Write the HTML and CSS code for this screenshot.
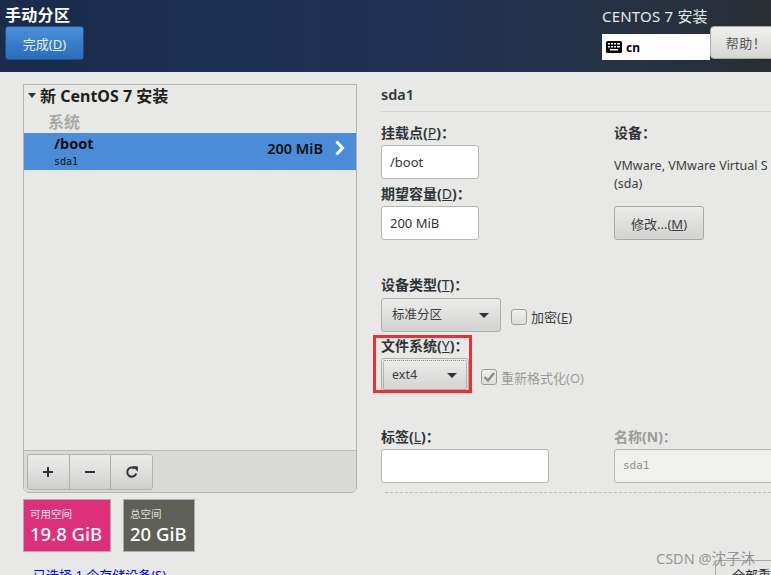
FILE: index.html
```html
<!DOCTYPE html>
<html lang="zh-CN">
<head>
<meta charset="utf-8">
<title>手动分区</title>
<link rel="stylesheet" href="styles.css">
</head>
<body>
<div class="app">
  <header class="header">
    <div class="header-left">
      <h1 class="title">手动分区</h1>
      <button class="done">完成(<u>D</u>)</button>
    </div>
    <div class="header-right">
      <div class="product">CENTOS 7 安装</div>
      <div class="kb-row">
        <div class="kb">
          <svg class="kb-icon" width="16" height="14" viewBox="0 0 16 14"><rect x="0" y="1" width="16" height="12" rx="1.5" fill="#000"/><g fill="#fff"><rect x="2" y="3" width="2" height="1.5"/><rect x="5" y="3" width="2" height="1.5"/><rect x="8" y="3" width="2" height="1.5"/><rect x="11" y="3" width="3" height="1.5"/><rect x="2" y="6" width="2" height="1.5"/><rect x="5" y="6" width="2" height="1.5"/><rect x="8" y="6" width="2" height="1.5"/><rect x="11" y="6" width="3" height="1.5"/><rect x="4" y="9" width="8" height="1.5"/></g></svg>
          <span class="kb-text">cn</span>
        </div>
        <button class="help">帮助！</button>
      </div>
    </div>
  </header>
  <main class="main">
    <section class="left">
      <div class="panel">
        <div class="tree">
          <div class="tree-head"><span class="arrow"></span><span>新 CentOS 7 安装</span></div>
          <div class="tree-group">系统</div>
          <div class="row">
            <div class="row-names">
              <div class="row-mount">/boot</div>
              <div class="row-dev">sda1</div>
            </div>
            <div class="row-size">200 MiB</div>
            <svg class="row-chev" width="12" height="16" viewBox="0 0 12 16"><path d="M2.5 1.5 L8.5 8 L2.5 14.5" fill="none" stroke="#fff" stroke-width="3"/></svg>
          </div>
        </div>
        <div class="toolbar">
          <div class="btn-group">
            <button class="tool"><svg width="12" height="12" viewBox="0 0 12 12"><path d="M6 1v10M1 6h10" stroke="#2e3436" stroke-width="2" fill="none"/></svg></button>
            <button class="tool"><svg width="12" height="12" viewBox="0 0 12 12"><path d="M1 6h10" stroke="#2e3436" stroke-width="2" fill="none"/></svg></button>
            <button class="tool"><svg width="14" height="14" viewBox="0 0 14 14"><path d="M11.2 8.5A4.6 4.6 0 1 1 9.6 3.4" stroke="#2e3436" stroke-width="2" fill="none"/><path d="M7.6 1 13 1.4 12.6 6.8Z" fill="#2e3436"/></svg></button>
          </div>
        </div>
      </div>
      <div class="stats">
        <div class="stat stat-free"><div class="stat-label">可用空间</div><div class="stat-value">19.8 GiB</div></div>
        <div class="stat stat-total"><div class="stat-label">总空间</div><div class="stat-value">20 GiB</div></div>
      </div>
      <div class="link"><u>已选择 1 个存储设备(S)</u></div>
    </section>
    <section class="right">
      <div class="dev-title">sda1</div>
      <div class="cols cols-top">
        <div class="col-a">
          <label class="lbl lbl-first">挂载点(<u>P</u>)：</label>
          <div class="input input-s">/boot</div>
          <label class="lbl lbl-next">期望容量(<u>D</u>)：</label>
          <div class="input input-s">200 MiB</div>
        </div>
        <div class="col-b">
          <label class="lbl lbl-first">设备：</label>
          <div class="dev-desc">VMware, VMware Virtual S<br>(sda)</div>
          <button class="modify">修改...(<u>M</u>)</button>
        </div>
      </div>
      <label class="lbl lbl-type">设备类型(<u>T</u>)：</label>
      <div class="opt-row">
        <div class="select select-w">标准分区<span class="caret"></span></div>
        <span class="check"></span><span class="check-text">加密(<u>E</u>)</span>
      </div>
      <label class="lbl lbl-fs">文件系统(<u>Y</u>)：</label>
      <div class="opt-row opt-fs">
        <div class="select select-n"><span class="focus"></span>ext4<span class="caret"></span></div>
        <span class="check check-on"><svg width="14" height="14" viewBox="0 0 14 14"><path d="M2.5 7 6 10.5 12 3" fill="none" stroke="#8a8c88" stroke-width="2.4"/></svg></span><span class="check-text dim">重新格式化(O)</span>
      </div>
      <div class="cols cols-label">
        <div class="col-a">
          <label class="lbl">标签(<u>L</u>)：</label>
          <div class="input input-m"></div>
        </div>
        <div class="col-b">
          <label class="lbl dim">名称(N)：</label>
          <div class="input input-l">sda1</div>
        </div>
      </div>
      <div class="dash"></div>
    </section>
  </main>
  <div class="redbox"></div>
  <button class="reset">全部重设(R)</button>
  <div class="mark">CSDN @沈子沐</div>
</div>
</body>
</html>
```
FILE: styles.css
```css
* { box-sizing: border-box; }
html, body { margin: 0; padding: 0; height: 100%; overflow: hidden; }
body {
  font-family: "Noto Sans", "Noto Sans CJK SC", sans-serif;
  font-size: 13px;
  color: #2e3436;
  background: #e8e8e6;
}
.app { position: relative; width: 771px; height: 575px; overflow: hidden; background: #e8e8e6; }
button { font-family: inherit; margin: 0; padding: 0; }

.header {
  height: 72px;
  display: flex;
  justify-content: space-between;
  color: #fff;
  background: linear-gradient(90deg, #1a2b4c 0%, #1c3054 30%, #1f3050 55%, #243349 75%, #2a2e33 100%);
}
.header-left { padding: 5px 0 0 5px; }
.title { margin: 0; font-size: 16px; font-weight: 700; line-height: 20px; color: #fff; letter-spacing: 0.3px; }
.done {
  display: block;
  width: 79px; height: 34px; margin-top: 1px;
  border: 1px solid #1d4f8c; border-radius: 3px;
  background: linear-gradient(180deg, #4a90d9 0%, #2a6cb8 100%);
  color: #e8f0f8; font-size: 13px;
}
.header-right { width: 169px; padding-top: 6px; }
.product { font-size: 15px; line-height: 20px; color: #e6e8ea; letter-spacing: 0.2px; }
.kb-row { display: flex; align-items: flex-start; margin-top: 8px; }
.kb { width: 108px; height: 26px; flex: none; background: #fff; display: flex; align-items: center; padding-left: 4px; gap: 4px; }
.kb-icon { display: block; }
.kb-text { color: #000; font-weight: 700; font-size: 12px; }
.help {
  width: 72px; height: 33px; margin-top: -8px; flex: none;
  border: 1px solid #a8a8a4; border-radius: 4px;
  background: linear-gradient(180deg, #f0f0ee 0%, #d6d6d3 100%);
  color: #555753; font-size: 13px; letter-spacing: 0.5px;
}

.main { display: flex; }
.left { width: 334px; margin-left: 23px; padding-top: 12px; }
.panel {
  height: 409px;
  border: 1px solid #b4b4b0;
  border-radius: 0 0 6px 6px;
  display: flex; flex-direction: column;
}
.tree { flex: 1; }
.tree-head { height: 20px; display: flex; align-items: center; padding-left: 4px; gap: 4px; font-size: 16px; font-weight: 700; color: #1e1e1e; }
.arrow { width: 0; height: 0; border-left: 4.5px solid transparent; border-right: 4.5px solid transparent; border-top: 5px solid #2e3436; }
.tree-group { height: 28px; padding: 7px 0 0 24px; font-size: 16px; line-height: 20px; font-weight: 700; color: #a9aaa7; }
.row { height: 37px; background: #4a8cd8; display: flex; align-items: center; padding-left: 30px; color: #0e0e0e; }
.row-names { flex: 1; align-self: flex-start; }
.row-mount { font-size: 14.5px; font-weight: 700; line-height: 20px; }
.row-dev { font-family: "DejaVu Sans Mono", monospace; font-size: 10px; line-height: 14px; margin-top: 2px; }
.row-size { font-size: 14.5px; font-weight: 600; margin: 0 11px 8px 0; }
.row-chev { margin: 0 10px 8px 0; }
.toolbar { height: 42px; flex: none; border-top: 1px solid #b9b9b6; background: #d9d9d7; border-radius: 0 0 5px 5px; padding: 3px 0 0 3px; }
.btn-group { display: flex; width: 126px; height: 36px; border: 1px solid #b0b0ac; border-radius: 3px; overflow: hidden; }
.tool { flex: 1; border: 0; border-right: 1px solid #aeaeaa; background: linear-gradient(180deg, #ececea 0%, #d0d0ce 100%); display: flex; align-items: center; justify-content: center; }
.tool:last-child { border-right: 0; }
.tool svg { display: block; }

.stats { display: flex; gap: 12px; margin-top: 6px; }
.stat { height: 53px; border: 1px solid #adadaa; color: #fff; padding: 7px 6px 0; }
.stat-free { width: 88px; background: #de307a; }
.stat-total { width: 72px; background: #5e5f57; }
.stat-label { font-size: 10.5px; line-height: 14px; color: #f3e3ea; }
.stat-total .stat-label { color: #e0e0dc; }
.stat-value { font-size: 18.5px; line-height: 24px; font-weight: 500; margin-top: 1px; white-space: nowrap; }
.link { margin: 15px 0 0 10px; font-size: 13px; line-height: 16px; color: #0000e6; white-space: nowrap; }

.right { flex: 1; margin-left: 24px; min-width: 0; }
.dev-title { height: 40px; padding-top: 12px; font-size: 14.5px; font-weight: 600; line-height: 20px; color: #2e3436; border-bottom: 1px solid #d2d2cf; }
.cols { display: flex; }
.col-a { width: 233px; flex: none; }
.col-b { flex: 1; min-width: 0; white-space: nowrap; overflow: hidden; }
.lbl { display: block; font-size: 14px; line-height: 18px; font-weight: 700; color: #2e3436; }
.lbl u { font-weight: 400; }
.lbl-first { margin-top: 12px; }
.lbl-next { margin-top: 6px; }
.input {
  height: 34px; margin-top: 3px;
  background: #fff; border: 1px solid #b6b6b2; border-radius: 3px;
  padding-left: 8px; line-height: 32px; font-size: 13px; color: #2e3436;
}
.input-s { width: 98px; }
.input-m { width: 168px; }
.input-l { width: 190px; background: #f0f0ee; color: #8f908d; font-family: "DejaVu Sans Mono", monospace; font-size: 11px; }
.dev-desc { margin-top: 15px; font-size: 12.5px; line-height: 18px; color: #3a3d3e; }
.modify {
  display: block; width: 90px; height: 34px; margin-top: 13px;
  border: 1px solid #a8a8a4; border-radius: 3px;
  background: linear-gradient(180deg, #ececea 0%, #d2d2d0 100%);
  color: #3a3d3e; font-size: 13px;
}
.lbl-type { margin-top: 36px; }
.opt-row { display: flex; align-items: center; margin-top: 4px; height: 34px; }
.select {
  position: relative; height: 34px;
  border: 1px solid #aeaeaa; border-radius: 3px;
  background: linear-gradient(180deg, #ececea 0%, #d2d2d0 100%);
  padding-left: 10px; line-height: 32px; font-size: 12.5px; color: #3a3d3e; flex: none;
}
.select-w { width: 120px; }
.select-n { width: 88px; }
.caret { position: absolute; right: 11px; top: 14px; width: 0; height: 0; border-left: 5px solid transparent; border-right: 5px solid transparent; border-top: 5px solid #2e3436; }
.focus { position: absolute; left: 1px; top: 1px; right: 1px; bottom: 1px; border: 1px dotted #8a8a86; border-radius: 2px; }
.check { width: 16px; height: 16px; margin: 4px 4px 0 10px; border: 1px solid #9d9d99; border-radius: 3px; background: linear-gradient(180deg, #f0f0ee, #dcdcda); flex: none; display: flex; align-items: center; justify-content: center; }
.check-on { margin: 4px 4px 0 12px; }
.check-on svg { display: block; }
.check-text { margin-top: 2px; font-size: 13px; color: #3a3d3e; white-space: nowrap; }
.check-on + .check-text { margin-top: 4px; color: #9a9b98; }
.dim { color: #9a9b98; }
.lbl-fs { margin-top: 5px; }
.opt-fs { margin-top: 3px; }
.cols-label { margin-top: 36px; }
.dash { height: 0; margin: 9px 0 0 4px; border-top: 1px dashed #bcbcb9; }

.redbox { position: absolute; left: 373px; top: 335px; width: 99px; height: 58px; border: 3px solid #f03030; }
.reset { position: absolute; left: 715px; top: 560px; width: 70px; height: 30px; border: 1px solid #a8a8a4; border-radius: 3px 0 0 0; background: #e6e6e4; color: #2e3436; font-size: 13px; text-align: left; padding: 0 0 0 16px; line-height: 28px; white-space: nowrap; overflow: hidden; display: block; }
.mark { position: absolute; left: 656px; top: 548px; font-size: 14.5px; line-height: 20px; color: rgba(120,120,120,0.75); white-space: nowrap; }
```
